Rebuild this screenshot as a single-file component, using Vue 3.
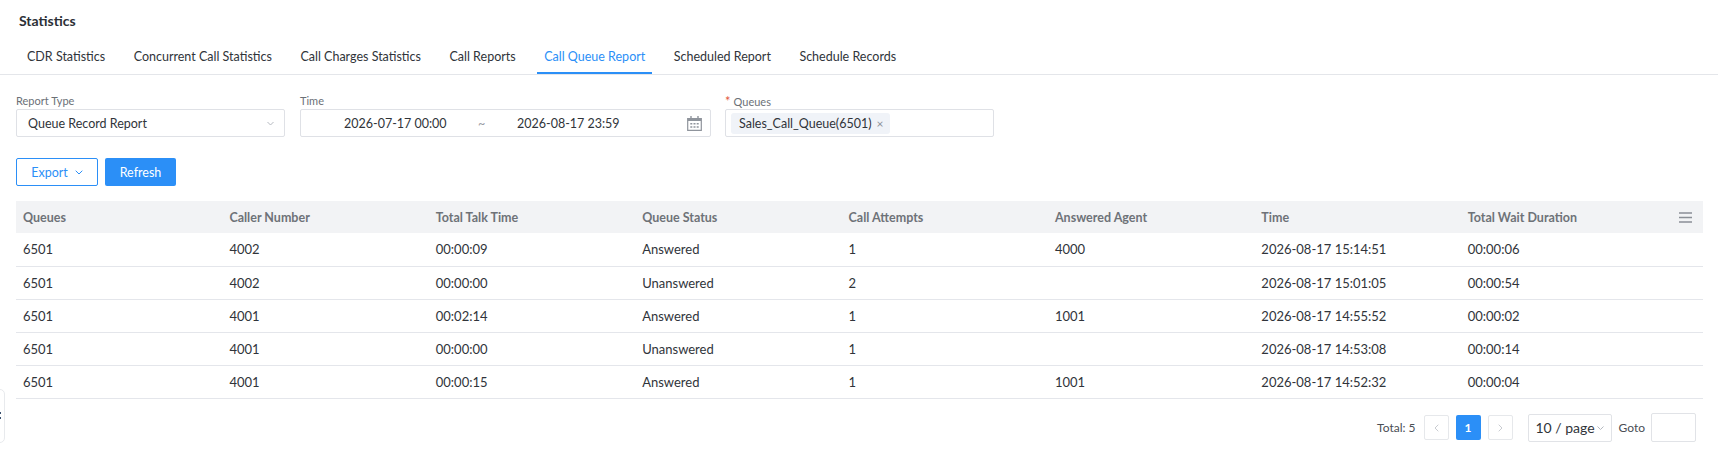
<script setup>
const tabs = ['CDR Statistics', 'Concurrent Call Statistics', 'Call Charges Statistics', 'Call Reports', 'Call Queue Report', 'Scheduled Report', 'Schedule Records']
const cols = ['Queues', 'Caller Number', 'Total Talk Time', 'Queue Status', 'Call Attempts', 'Answered Agent', 'Time', 'Total Wait Duration']
const rows = [
  ['6501', '4002', '00:00:09', 'Answered', '1', '4000', '2026-08-17 15:14:51', '00:00:06'],
  ['6501', '4002', '00:00:00', 'Unanswered', '2', '', '2026-08-17 15:01:05', '00:00:54'],
  ['6501', '4001', '00:02:14', 'Answered', '1', '1001', '2026-08-17 14:55:52', '00:00:02'],
  ['6501', '4001', '00:00:00', 'Unanswered', '1', '', '2026-08-17 14:53:08', '00:00:14'],
  ['6501', '4001', '00:00:15', 'Answered', '1', '1001', '2026-08-17 14:52:32', '00:00:04'],
]
</script>

<template>
  <div class="page">
    <div class="title">Statistics</div>
    <div class="tabs">
      <div v-for="t in tabs" :key="t" class="tab" :class="{ active: t === 'Call Queue Report' }">{{ t }}</div>
    </div>

    <div class="filters">
      <div class="field w-type">
        <div class="label">Report Type</div>
        <div class="box select">
          <span>Queue Record Report</span>
          <svg class="chev" width="7" height="5" viewBox="0 0 7 5"><path d="M.5 1l3 3 3-3" fill="none" stroke="#b5b9c0" stroke-width="1"/></svg>
        </div>
      </div>
      <div class="field w-time">
        <div class="label">Time</div>
        <div class="box range">
          <span class="d1">2026-07-17 00:00</span>
          <span class="tilde">~</span>
          <span class="d2">2026-08-17 23:59</span>
          <svg class="cal" width="15" height="15" viewBox="0 0 15 15">
            <path d="M.7 2.5h13.6v11.8H.7z" fill="none" stroke="#8f949c" stroke-width="1.2"/>
            <path d="M.7 2h13.6v3H.7z" fill="#8f949c"/>
            <path d="M4 0v2.5M11 0v2.5" stroke="#8f949c" stroke-width="1.4"/>
            <path d="M3.3 7h2v1.6h-2zM6.5 7h2v1.6h-2zM9.7 7h2v1.6h-2zM3.3 10.2h2v1.6h-2zM6.5 10.2h2v1.6h-2zM9.7 10.2h2v1.6h-2z" fill="#8f949c"/>
          </svg>
        </div>
      </div>
      <div class="field w-type">
        <div class="label"><span class="req">*</span>Queues</div>
        <div class="box tagbox">
          <span class="tag">Sales_Call_Queue(6501)<span class="x">×</span></span>
        </div>
      </div>
    </div>

    <div class="actions">
      <button class="btn ghost">Export
        <svg width="8" height="5" viewBox="0 0 8 5"><path d="M.7.7L4 4l3.3-3.3" fill="none" stroke="#2b8ff7" stroke-width="1"/></svg>
      </button>
      <button class="btn solid">Refresh</button>
    </div>

    <table class="table">
      <thead>
        <tr>
          <th v-for="c in cols" :key="c">{{ c }}</th>
          <th class="menu">
            <svg width="13" height="11" viewBox="0 0 13 11"><path d="M0 1h13M0 5.5h13M0 10h13" stroke="#8a8f96" stroke-width="1.4"/></svg>
          </th>
        </tr>
      </thead>
      <tbody>
        <tr v-for="(r, i) in rows" :key="i">
          <td v-for="(v, j) in r" :key="j">{{ v }}</td>
          <td></td>
        </tr>
      </tbody>
    </table>

    <div class="pager">
      <span class="total">Total: 5</span>
      <span class="pg off"><svg width="5" height="8" viewBox="0 0 5 8"><path d="M4.3.7L1 4l3.3 3.3" fill="none" stroke="#c9ccd1"/></svg></span>
      <span class="pg cur">1</span>
      <span class="pg off"><svg width="5" height="8" viewBox="0 0 5 8"><path d="M.7.7L4 4 .7 7.3" fill="none" stroke="#c9ccd1"/></svg></span>
      <span class="size">10 / page<svg width="7" height="4" viewBox="0 0 7 4"><path d="M.5.5l3 3 3-3" fill="none" stroke="#b5b9c0"/></svg></span>
      <span class="goto">Goto</span>
      <span class="gobox"></span>
    </div>

    <div class="side"><i></i><i></i></div>
  </div>
</template>

<style>
html, body { margin: 0; background: #fff; overflow: hidden; }
</style>

<style scoped>
.page {
  position: relative;
  width: 1718px;
  height: 450px;
  overflow: hidden;
  font-family: Lato, "Open Sans", sans-serif;
  font-size: 12.5px;
  color: #30343a;
  background: #fff;
}
.title {
  height: 14px;
  line-height: 14px;
  padding: 14px 0 0 19px;
  font-size: 14px;
  font-weight: 700;
  color: #2c3036;
}
.tabs {
  display: flex;
  gap: 14.5px;
  margin-top: 13px;
  padding-left: 20px;
  height: 33px;
  border-bottom: 1px solid #e4e6ea;
}
.tab {
  padding: 0 7px;
  line-height: 32px;
  height: 33px;
  box-sizing: border-box;
  border-bottom: 2px solid transparent;
  white-space: nowrap;
}
.tab.active {
  color: #2b8ff7;
  border-bottom-color: #2b8ff7;
}
.filters {
  display: flex;
  gap: 15px;
  padding: 18px 0 0 16px;
}
.field { display: flex; flex-direction: column; }
.w-type { width: 269px; }
.w-time { width: 411px; }
.filters .field:last-child { margin-left: -1px; }
.label {
  height: 16px;
  line-height: 16px;
  font-size: 11px;
  color: #6b7077;
}
.req { color: #e2583e; margin-right: 3px; font-size: 13px; }
.box {
  height: 28px;
  border: 1px solid #dfe1e6;
  border-radius: 2px;
  box-sizing: border-box;
  display: flex;
  align-items: center;
}
.select {
  justify-content: space-between;
  padding: 0 10px 0 11px;
}
.range { padding: 0 8px 0 43px; }
.d1 { width: 134px; }
.tilde { width: 7px; text-align: center; color: #9a9ea5; }
.d2 { flex: 1; margin-left: 32px; }
.tagbox { padding: 0 5px; }
.tag {
  height: 21px;
  line-height: 21px;
  background: #f0f3f8;
  border-radius: 3px;
  padding: 0 6px 0 8px;
}
.x { color: #8d9198; margin-left: 5px; font-size: 12px; }
.actions {
  display: flex;
  gap: 7px;
  padding: 21px 0 0 16px;
}
.btn {
  height: 28px;
  box-sizing: border-box;
  border-radius: 2px;
  font-family: inherit;
  font-size: 12.5px;
  cursor: pointer;
}
.ghost {
  width: 82px;
  background: #fff;
  color: #2b8ff7;
  border: 1px solid #2b8ff7;
  display: flex;
  align-items: center;
  justify-content: center;
  gap: 7px;
}
.solid {
  width: 71px;
  background: #2b8ff7;
  color: #fff;
  border: 0;
}
.table {
  width: 1687px;
  margin: 15px 0 0 16px;
  border-collapse: collapse;
  table-layout: fixed;
}
.table th {
  width: 206.4px;
  height: 32px;
  padding: 0 7px;
  box-sizing: border-box;
  text-align: left;
  background: #f2f3f5;
  color: #6e7278;
  font-weight: 700;
  font-size: 12.5px;
}
.table th.menu { width: auto; padding: 0 0 0 12px; }
.table th.menu svg { display: block; }
.table td {
  height: 33.2px;
  padding: 0 7px;
  box-sizing: border-box;
  border-bottom: 1px solid #e4e6eb;
  font-size: 13px;
}
.pager {
  display: flex;
  align-items: center;
  justify-content: flex-end;
  margin-top: 14px;
  padding-right: 22px;
  height: 29px;
}
.total { font-size: 12px; margin-right: 8px; color: #4a4e54; }
.pg {
  width: 25px;
  height: 25px;
  box-sizing: border-box;
  border-radius: 2px;
  display: flex;
  align-items: center;
  justify-content: center;
  font-size: 12px;
}
.pg.off { border: 1px solid #e6e8eb; }
.pg.cur { background: #2b8ff7; color: #fff; margin: 0 7px; font-weight: 700; }
.size {
  width: 84px;
  height: 28px;
  margin-left: 15px;
  box-sizing: border-box;
  border: 1px solid #e1e3e7;
  border-radius: 2px;
  display: flex;
  align-items: center;
  justify-content: center;
  gap: 2px;
  font-size: 14px;
}
.goto { font-size: 12px; margin: 0 6px 0 7px; color: #4a4e54; }
.gobox {
  width: 45px;
  height: 29px;
  box-sizing: border-box;
  border: 1px solid #e1e3e7;
  border-radius: 2px;
}
.side {
  position: absolute;
  left: -6px;
  top: 389px;
  width: 11px;
  height: 54px;
  box-sizing: border-box;
  border: 1px solid #e8eaed;
  border-radius: 5px;
  background: #fff;
}
.side i {
  position: absolute;
  right: 3px;
  width: 2px;
  height: 2px;
  background: #39506e;
}
.side i:first-child { top: 22px; }
.side i:last-child { top: 27px; }
</style>
